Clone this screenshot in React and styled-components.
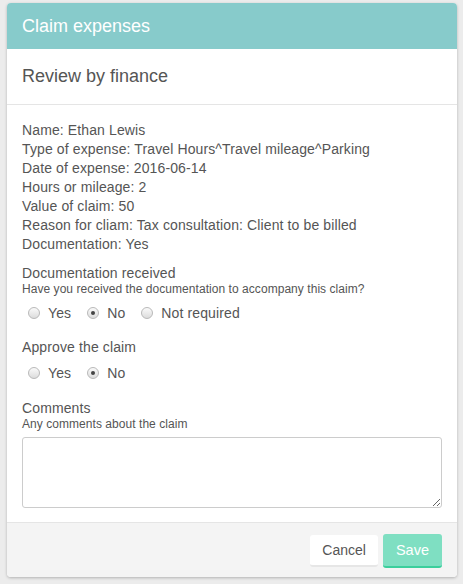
import React, { useState } from 'react';
import styled, { createGlobalStyle } from 'styled-components';

const GlobalStyle = createGlobalStyle`
    html, body {
        margin: 0;
        padding: 0;
        background: #ececec;
        font-family: "Liberation Sans", Arial, sans-serif;
        color: #555;
    }
    * { box-sizing: border-box; }
`;

const details = [
    'Name: Ethan Lewis',
    'Type of expense: Travel Hours^Travel mileage^Parking',
    'Date of expense: 2016-06-14',
    'Hours or mileage: 2',
    'Value of claim: 50',
    'Reason for cliam: Tax consultation: Client to be billed',
    'Documentation: Yes',
];

function RadioGroup({ options, value, onChange }) {
    return (
        <RadioRow>
            {options.map(opt => (
                <RadioLabel key={opt} onClick={() => onChange(opt)}>
                    <RadioDot checked={value === opt} />
                    {opt}
                </RadioLabel>
            ))}
        </RadioRow>
    );
}

function App() {
    const [docs, setDocs] = useState('No');
    const [approve, setApprove] = useState('No');

    return (
        <Page>
            <GlobalStyle />
            <Card>
                <Header>Claim expenses</Header>
                <SubHeader>Review by finance</SubHeader>
                <Body>
                    <Details>
                        {details.map(line => <div key={line}>{line}</div>)}
                    </Details>

                    <Field>
                        <Label>Documentation received</Label>
                        <Help>Have you received the documentation to accompany this claim?</Help>
                        <RadioGroup options={['Yes', 'No', 'Not required']} value={docs} onChange={setDocs} />
                    </Field>

                    <Field>
                        <Label>Approve the claim</Label>
                        <RadioGroup options={['Yes', 'No']} value={approve} onChange={setApprove} />
                    </Field>

                    <Field comments>
                        <Label>Comments</Label>
                        <Help>Any comments about the claim</Help>
                        <TextArea />
                    </Field>
                </Body>
                <Footer>
                    <Button>Cancel</Button>
                    <Button primary>Save</Button>
                </Footer>
            </Card>
        </Page>
    );
}

const Page = styled.div`
    padding: 3px 6px 7px 7px;
    width: 463px;
    min-height: 584px;
`

const Card = styled.div`
    width: 450px;
    background: #fff;
    border-radius: 4px;
    box-shadow: 0 1px 3px rgba(0, 0, 0, 0.25);
    overflow: hidden;
`

const Header = styled.div`
    height: 46px;
    background: #87cbcb;
    color: #fff;
    font-size: 18px;
    padding: 0 15px;
    display: flex;
    align-items: center;
`

const SubHeader = styled.div`
    height: 56px;
    padding: 0 15px;
    display: flex;
    align-items: center;
    font-size: 18px;
    color: #555;
    border-bottom: 1px solid #e5e5e5;
`

const Body = styled.div`
    padding: 16px 15px 14px 15px;
    font-size: 14px;
    letter-spacing: 0.12px;
`

const Details = styled.div`
    line-height: 19px;
    margin-bottom: 9px;
`

const Field = styled.div`
    padding-top: ${props => props.comments ? '1px' : '0'};
    margin-bottom: 13px;

    &:last-child {
        margin-bottom: 0;
    }
`

const Label = styled.div`
    font-size: 14px;
    line-height: 20px;
`

const Help = styled.div`
    font-size: 12px;
    line-height: 16px;
    margin-top: -2px;
    letter-spacing: 0.05px;
`

const RadioRow = styled.div`
    display: flex;
    gap: 16px;
    padding: 4px 0 0 6px;
    height: 27px;
    align-items: center;
`

const RadioLabel = styled.label`
    display: flex;
    align-items: center;
    gap: 8px;
    font-size: 14px;
    cursor: pointer;
`

const RadioDot = styled.span`
    width: 12px;
    height: 12px;
    border-radius: 50%;
    border: 1px solid #b9b9b9;
    background: linear-gradient(#fafafa, #dcdcdc);
    display: inline-flex;
    align-items: center;
    justify-content: center;

    &::after {
        content: '';
        width: 4px;
        height: 4px;
        border-radius: 50%;
        background: ${props => props.checked ? '#444' : 'transparent'};
    }
`

const TextArea = styled.textarea`
    display: block;
    width: 100%;
    height: 71px;
    margin-top: 5px;
    border: 1px solid #ccc;
    border-radius: 3px;
    resize: vertical;
    font-family: inherit;
    font-size: 14px;
`

const Footer = styled.div`
    background: #f4f4f4;
    border-top: 1px solid #e5e5e5;
    height: 55px;
    padding: 2px 15px 0 15px;
    display: flex;
    justify-content: flex-end;
    align-items: center;
    gap: 5px;
`

const Button = styled.button`
    height: ${props => props.primary ? '34px' : '32px'};
    padding: 0 ${props => props.primary ? '13px' : '12px'};
    font-family: inherit;
    font-size: ${props => props.primary ? '14.5px' : '14px'};
    border-radius: 3px;
    cursor: pointer;
    color: ${props => props.primary ? '#fff' : '#555'};
    background: ${props => props.primary ? '#7fdfc2' : '#fff'};
    border: 0;
    border-bottom: 2px solid ${props => props.primary ? '#3bcf9c' : '#e6e6e6'};
`

export default App;
